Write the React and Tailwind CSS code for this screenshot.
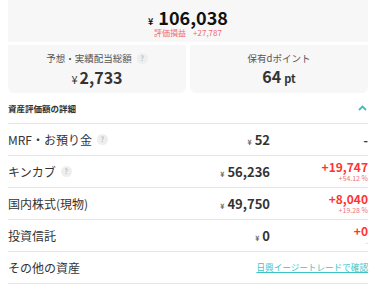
import React from "react";

const font = { fontFamily: '"Noto Sans CJK JP", "Noto Sans", sans-serif' };

function Q() {
  return (
    <span className="inline-flex items-center justify-center w-[11px] h-[11px] rounded-full bg-[#eeeeee] text-[#aaaaaa] text-[7px] leading-none ml-[5px]">
      ?
    </span>
  );
}

function Row({ label, q, amount, change, pct, link }) {
  return (
    <div className="flex items-center h-[32px] border-b border-[#e6e6e6]">
      <div className="flex-1 flex items-center text-[12px] text-[#333333]">
        {label}
        {q && <Q />}
      </div>
      {link ? (
        <a className="text-[8.6px] text-[#3cc4c4] underline leading-none">日興イージートレードで確認</a>
      ) : (
        <>
          <div className="flex items-baseline text-[#333333]">
            <span className="text-[7px] font-bold mr-[3px] text-[#666666]">¥</span>
            <span className="text-[13px] font-bold">{amount}</span>
          </div>
          <div className="w-[98px] flex flex-col items-end justify-center">
            <span className={`text-[12px] leading-[12px] font-bold ${change === "-" ? "text-[#333333]" : "text-[#ff3333]"}`}>{change}</span>
            {pct !== undefined && (
              <span className={`text-[7px] leading-[8px] mt-[1px] ${pct === "-" ? "text-[#bbbbbb]" : "text-[#f07080]"}`}>{pct}</span>
            )}
          </div>
        </>
      )}
    </div>
  );
}

export default function App() {
  return (
    <div className="w-[377px] h-[289px] bg-white overflow-hidden" style={font}>
      <div className="mx-2 w-[360px]">
        <div className="h-[42px] bg-[#f7f7f7] flex flex-col items-center justify-center pt-[2px]">
          <div className="flex items-baseline leading-none">
            <span className="text-[9px] text-[#111111] mr-[5px] font-bold">¥</span>
            <span className="text-[18px] font-bold text-[#111111]">106,038</span>
          </div>
          <div className="flex text-[8px] text-[#f06a7a] mt-[3px] leading-none">
            <span>評価損益</span>
            <span className="ml-[7px]">+27,787</span>
          </div>
        </div>
        <div className="flex gap-[4px] mt-[3px]">
          <div className="w-[178px] h-[48px] bg-[#f7f7f7] rounded-b-[6px] flex flex-col items-center justify-center">
            <div className="flex items-center text-[9.5px] text-[#555555] leading-none">
              予想・実績配当総額
              <Q />
            </div>
            <div className="flex items-baseline mt-[5px] leading-none text-[#333333]">
              <span className="text-[11px] mr-[2px]">¥</span>
              <span className="text-[16px] font-bold">2,733</span>
            </div>
          </div>
          <div className="w-[178px] h-[48px] bg-[#f7f7f7] rounded-b-[6px] flex flex-col items-center justify-center">
            <div className="text-[9.5px] text-[#555555] leading-none">保有dポイント</div>
            <div className="flex items-baseline mt-[5px] leading-none text-[#333333]">
              <span className="text-[16px] font-bold">64</span>
              <span className="text-[11px] font-bold ml-[3px]">pt</span>
            </div>
          </div>
        </div>
        <div className="flex items-center justify-between h-[31px] border-b border-[#e6e6e6]">
          <span className="text-[8.5px] font-bold text-[#333333]">資産評価額の詳細</span>
          <svg width="9" height="6" viewBox="0 0 9 6" className="mr-[1px]">
            <path d="M1 5 L4.5 1.5 L8 5" stroke="#3cbfbf" strokeWidth="1.8" fill="none" />
          </svg>
        </div>
        <Row label="MRF・お預り金" q amount="52" change="-" />
        <Row label="キンカブ" q amount="56,236" change="+19,747" pct="+54.12 %" />
        <Row label="国内株式(現物)" amount="49,750" change="+8,040" pct="+19.28 %" />
        <Row label="投資信託" amount="0" change="+0" pct="-" />
        <Row label="その他の資産" link />
      </div>
    </div>
  );
}
